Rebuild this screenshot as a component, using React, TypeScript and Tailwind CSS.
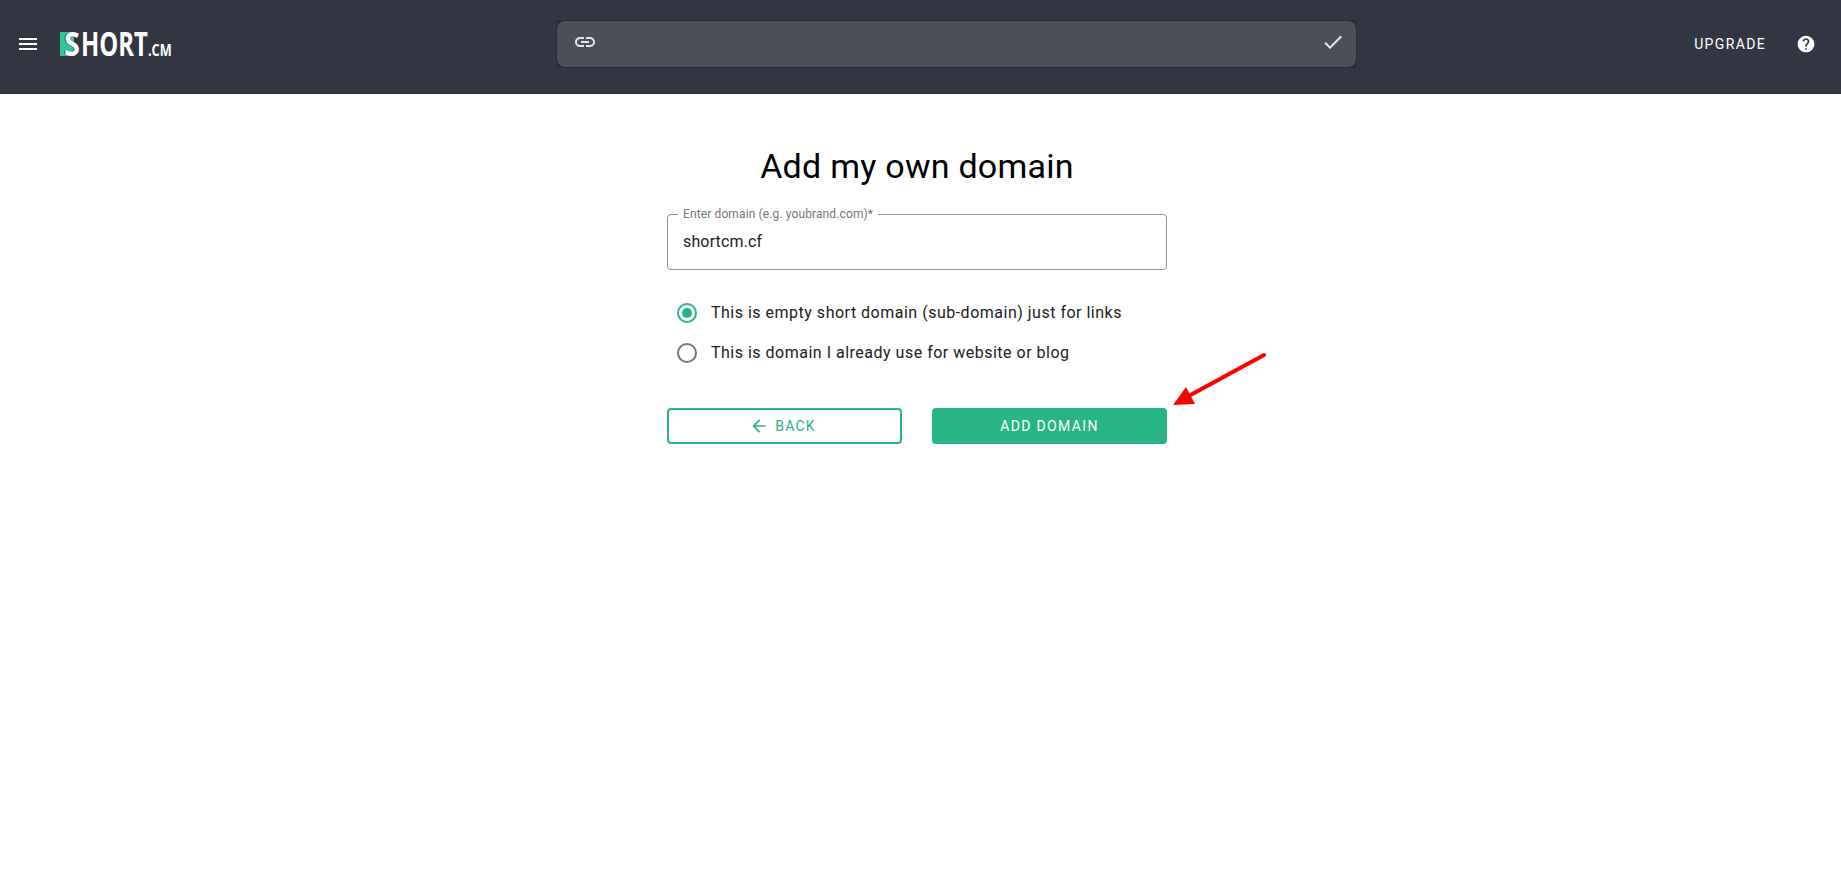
const roboto = "font-['Roboto',sans-serif]";

function Logo() {
  return (
    <div className="flex h-[24px] w-[111px] items-end font-['Open_Sans',sans-serif] font-bold text-white">
      <span className="relative h-[24px] w-[21px] shrink-0">
        <span className="absolute left-0 top-0 h-[24px] w-[14px] bg-[#2fc795]" />
        <span className="absolute left-[4px] top-0 origin-left whitespace-nowrap text-[33.6px] leading-[22px] [transform:scaleX(0.86)] [text-shadow:-1px_0_#323642]">S</span>
      </span>
      <span className="h-[24px] w-[67px] shrink-0 origin-left whitespace-nowrap text-[33.6px] leading-[22px] [transform:scaleX(0.71)]">HORT</span>
      <span className="w-[23px] shrink-0 origin-left whitespace-nowrap text-[15.5px] leading-[12px] [transform:scaleX(0.82)]">.CM</span>
    </div>
  );
}

export default function App() {
  return (
    <div className={`min-h-[889px] bg-white ${roboto}`}>
      <header className="flex h-[94px] items-center bg-[#323642] pb-[6px] pl-[19px] pr-[25px]">
        <div className="flex w-[537px] items-center gap-[23px]">
          <svg width="18" height="12" viewBox="0 0 18 12" fill="#fff">
            <path d="M0 12h18v-2H0v2zm0-5h18V5H0v2zm0-7v2h18V0H0z" />
          </svg>
          <Logo />
        </div>
        <div className="h-[48px] w-[801px] rounded-[3px] bg-[#2a2d37] p-[1px]">
          <div className="flex h-full items-center justify-between rounded-[8px] bg-[#4b4f59] pb-[4px] pl-[16px] pr-[11px]">
            <svg width="24" height="24" viewBox="0 0 24 24" fill="#e4e5e7">
              <path d="M3.9 12c0-1.71 1.39-3.1 3.1-3.1h4V7H7c-2.76 0-5 2.24-5 5s2.24 5 5 5h4v-1.9H7c-1.71 0-3.1-1.39-3.1-3.1zM8 13h8v-2H8v2zm9-6h-4v1.9h4c1.71 0 3.1 1.39 3.1 3.1s-1.39 3.1-3.1 3.1h-4V17h4c2.76 0 5-2.24 5-5s-2.24-5-5-5z" />
            </svg>
            <svg width="24" height="24" viewBox="0 0 24 24" fill="#e4e5e7">
              <path d="M9 16.17L4.83 12l-1.42 1.41L9 19 21 7l-1.41-1.41z" />
            </svg>
          </div>
        </div>
        <div className="flex flex-1 items-center justify-end gap-[30px]">
          <span className="text-[14px] font-[450] tracking-[1.35px] text-white">UPGRADE</span>
          <svg width="20" height="20" viewBox="0 0 24 24" fill="#fff">
            <path d="M12 2C6.48 2 2 6.48 2 12s4.48 10 10 10 10-4.48 10-10S17.52 2 12 2zm1 17h-2v-2h2v2zm2.07-7.75l-.9.92C13.45 12.9 13 13.5 13 15h-2v-.5c0-1.1.45-2.1 1.17-2.83l1.24-1.26c.37-.36.59-.86.59-1.41 0-1.1-.9-2-2-2s-2 .9-2 2H8c0-2.21 1.79-4 4-4s4 1.79 4 4c0 .88-.36 1.68-.93 2.25z" />
          </svg>
        </div>
      </header>

      <main className="flex justify-center pr-[7px] pt-[51px]">
        <div className="flex w-[500px] flex-col">
          <h1 className="text-center text-[34px] font-normal leading-[42px] tracking-[0.25px] text-black">Add my own domain</h1>

          <div className="relative mt-[27px] flex h-[56px] items-center rounded-[4px] border border-[#949494] px-[15px]">
            <span className="absolute left-[10px] top-[-8px] bg-white px-[5px] text-[12px] leading-[14px] tracking-[0.12px] text-[#757575]">
              Enter domain (e.g. youbrand.com)*
            </span>
            <span className="text-[16px] tracking-[0.15px] text-[#212121]">shortcm.cf</span>
          </div>

          <div className="mt-[33px] flex flex-col gap-[20px] pl-[10px]">
            <label className="flex h-[20px] items-center gap-[14px]">
              <span className="flex h-[20px] w-[20px] items-center justify-center rounded-full border-2 border-[#28b583]">
                <span className="h-[10px] w-[10px] rounded-full bg-[#28b583]" />
              </span>
              <span className="text-[16px] tracking-[0.5px] text-[#212121]">This is empty short domain (sub-domain) just for links</span>
            </label>
            <label className="flex h-[20px] items-center gap-[14px]">
              <span className="h-[20px] w-[20px] rounded-full border-2 border-[#757575]" />
              <span className="text-[16px] tracking-[0.5px] text-[#212121]">This is domain I already use for website or blog</span>
            </label>
          </div>

          <div className="relative mt-[45px] flex justify-between">
            <button className="flex h-[36px] w-[235px] items-center justify-center gap-[6px] rounded-[4px] border-2 border-[#28b583] bg-white pr-[4px] text-[14px] font-[450] tracking-[1.2px] text-[#28b583]">
              <svg width="20" height="20" viewBox="0 0 24 24" fill="#28b583">
                <path d="M20 11H7.83l5.59-5.59L12 4l-8 8 8 8 1.41-1.41L7.83 13H20v-2z" />
              </svg>
              BACK
            </button>
            <button className="flex h-[36px] w-[235px] items-center justify-center rounded-[4px] bg-[#28b583] text-[14px] font-[450] tracking-[1.35px] text-white">
              ADD DOMAIN
            </button>
            <svg className="absolute left-[504px] top-[-55px]" width="96" height="56" viewBox="0 0 96 56">
              <path d="M93 2L14 45" stroke="#ff0000" strokeWidth="4" strokeLinecap="round" />
              <path d="M2 52L24 51L15 34Z" fill="#ff0000" />
            </svg>
          </div>
        </div>
      </main>
    </div>
  );
}
